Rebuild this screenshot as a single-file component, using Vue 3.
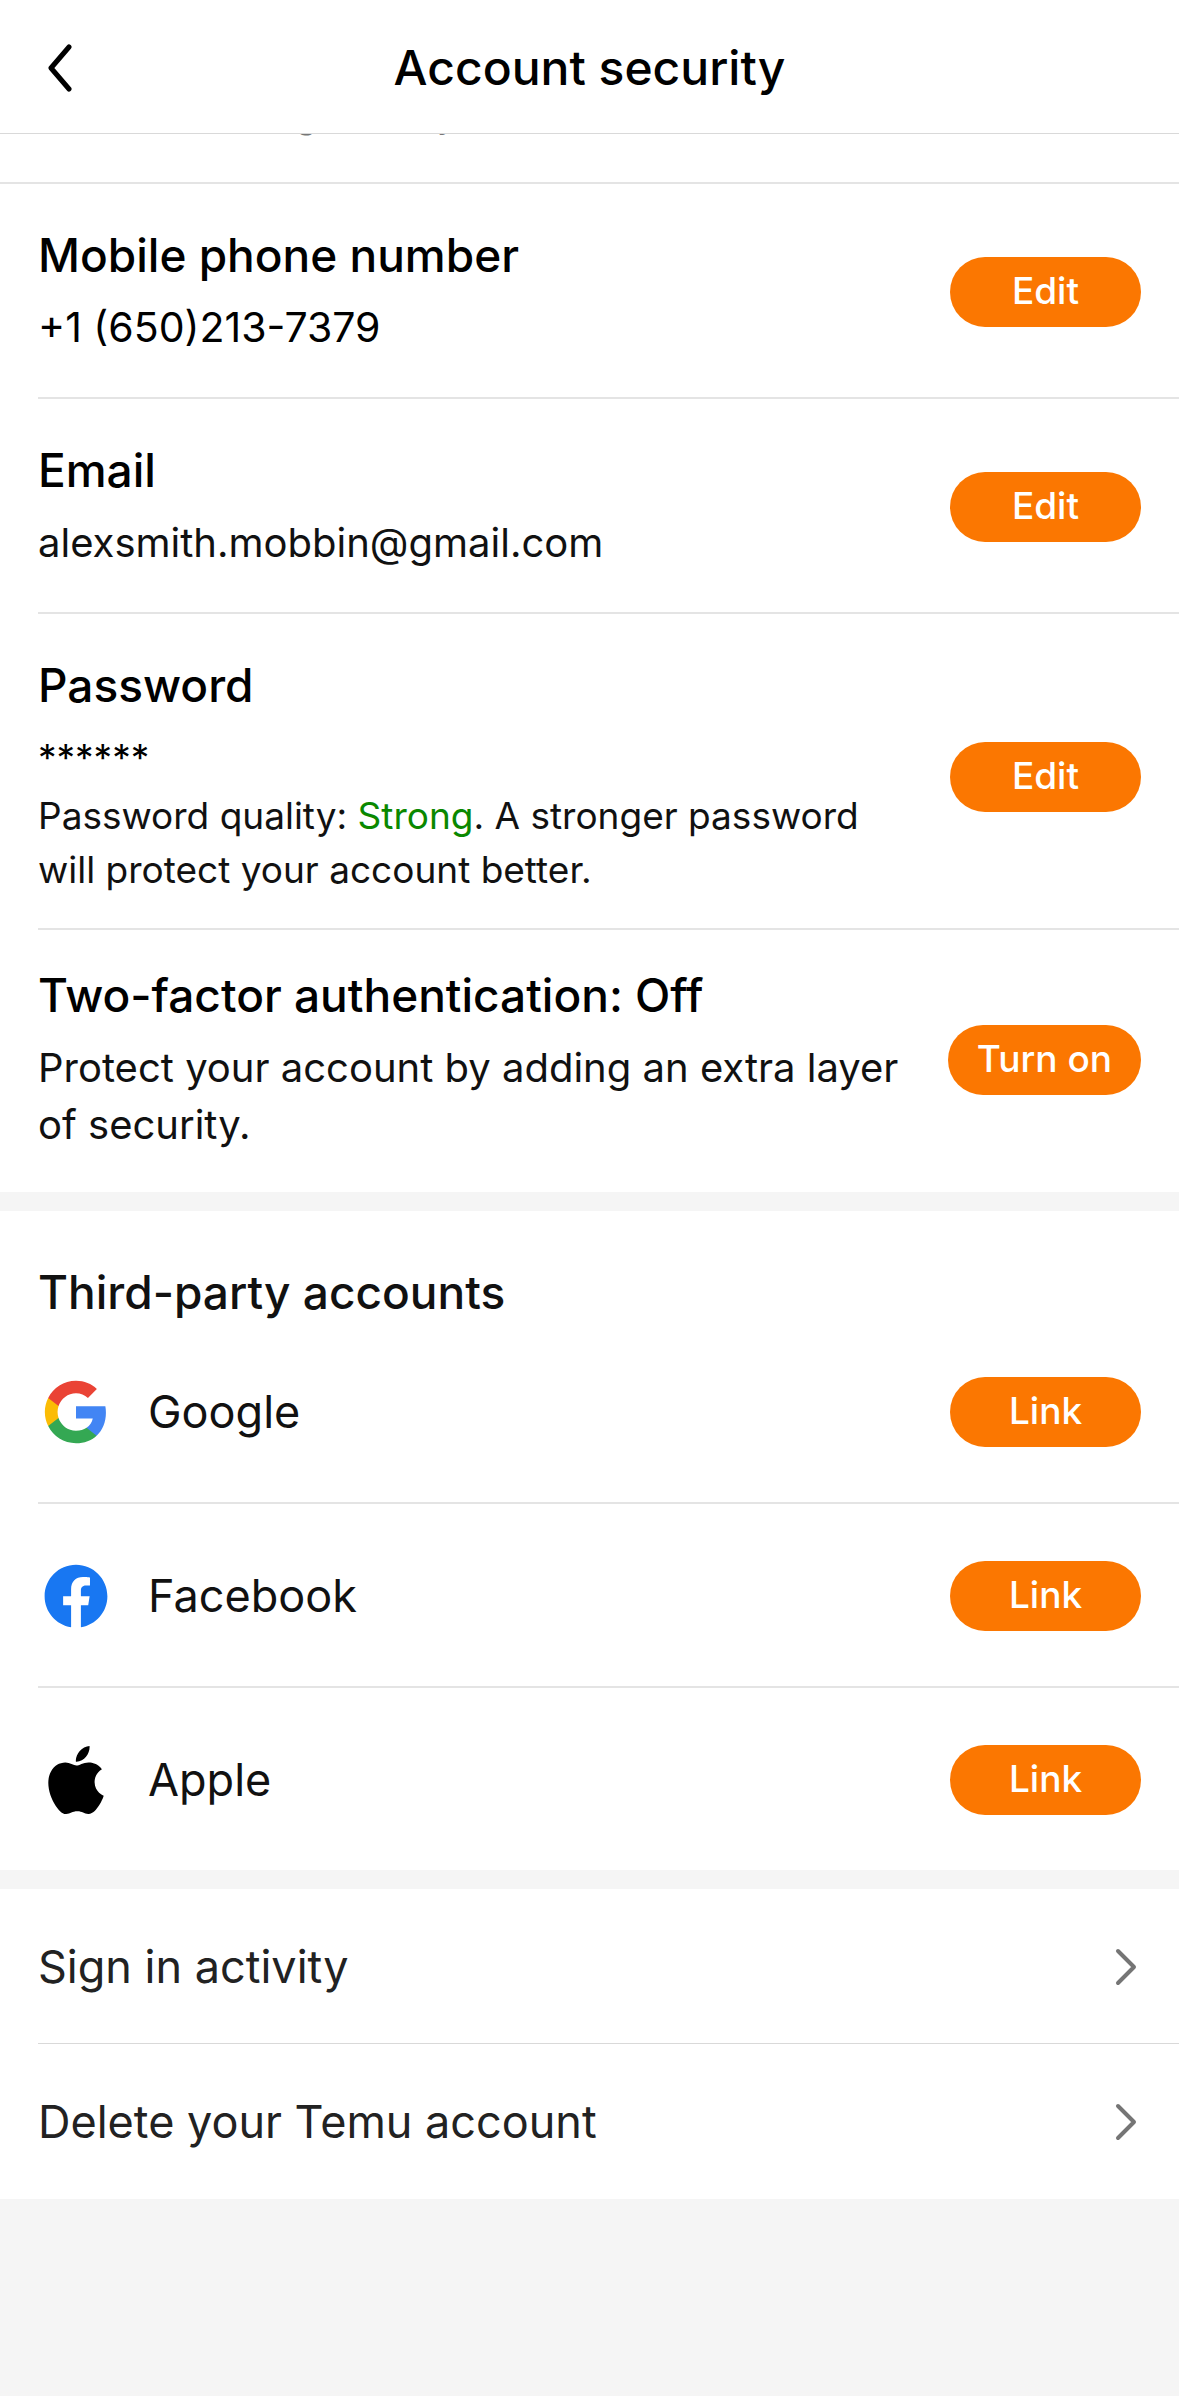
<script setup>
const credentials = [
  { title: 'Mobile phone number', value: '+1 (650)213-7379', action: 'Edit', kind: 'phone' },
  { title: 'Email', value: 'alexsmith.mobbin@gmail.com', action: 'Edit', kind: 'soft' },
]
const providers = ['Google', 'Facebook', 'Apple']
const links = ['Sign in activity', 'Delete your Temu account']
</script>

<template>
  <div class="page">
    <header class="bar">
      <button class="back" aria-label="Back">
        <svg viewBox="0 0 24 48" width="24" height="48" fill="none" stroke="#000" stroke-width="5" stroke-linecap="round" stroke-linejoin="round">
          <path d="M21 3 3 24l18 21" />
        </svg>
      </button>
      <h1>Account security</h1>
    </header>

    <main>
      <section class="group">
        <!-- Scrolled almost completely under the header -->
        <div class="notice"><p>We have a strong security</p></div>
        <div v-for="c in credentials" :key="c.title" class="row line">
          <div class="info">
            <h2>{{ c.title }}</h2>
            <p class="value" :class="c.kind">{{ c.value }}</p>
          </div>
          <button class="pill">{{ c.action }}</button>
        </div>
        <div class="row line password">
          <div class="info">
            <h2>Password</h2>
            <p class="value stars">******</p>
            <p class="hint">Password quality: <span class="strong">Strong</span>. A stronger password will protect your account better.</p>
          </div>
          <button class="pill">Edit</button>
        </div>
        <div class="row factor">
          <div class="info">
            <h2>Two-factor authentication: Off</h2>
            <p class="value soft">Protect your account by adding an extra layer of security.</p>
          </div>
          <button class="pill">Turn on</button>
        </div>
      </section>

      <section class="group third">
        <h2>Third-party accounts</h2>
        <div v-for="(p, i) in providers" :key="p" class="row provider" :class="{ line: i < 2 }">
          <svg v-if="p === 'Google'" class="logo" viewBox="0 0 24 24">
            <path fill="#4285f4" d="M22.56 12.25c0-.78-.07-1.53-.2-2.25H12v4.26h5.92c-.26 1.37-1.04 2.53-2.21 3.31v2.77h3.57c2.08-1.92 3.28-4.74 3.28-8.09z" />
            <path fill="#34a853" d="M12 23c2.97 0 5.46-.98 7.28-2.66l-3.57-2.77c-.98.66-2.23 1.06-3.71 1.06-2.86 0-5.29-1.93-6.16-4.53H2.18v2.84C3.99 20.53 7.7 23 12 23z" />
            <path fill="#fbbc05" d="M5.84 14.09c-.22-.66-.35-1.36-.35-2.09s.13-1.43.35-2.09V7.07H2.18C1.43 8.55 1 10.22 1 12s.43 3.45 1.18 4.93l3.66-2.84z" />
            <path fill="#ea4335" d="M12 5.38c1.62 0 3.06.56 4.21 1.64l3.15-3.15C17.45 2.09 14.97 1 12 1 7.7 1 3.99 3.47 2.18 7.07l3.66 2.84c.87-2.6 3.3-4.53 6.16-4.53z" />
          </svg>
          <svg v-else-if="p === 'Facebook'" class="logo" viewBox="-1 -1 26 26">
            <path fill="#1877f2" d="M24 12.073c0-6.627-5.373-12-12-12s-12 5.373-12 12c0 5.99 4.388 10.954 10.125 11.854v-8.385H7.078v-3.47h3.047V9.43c0-3.007 1.792-4.669 4.533-4.669 1.312 0 2.686.235 2.686.235v2.953H15.83c-1.491 0-1.956.925-1.956 1.874v2.25h3.328l-.532 3.47h-2.796v8.385C19.612 23.027 24 18.062 24 12.073z" />
          </svg>
          <svg v-else class="logo" viewBox="0 0 24 24">
            <path fill="#000" d="M12.152 6.896c-.948 0-2.415-1.078-3.96-1.04-2.04.027-3.91 1.183-4.961 3.014-2.117 3.675-.546 9.103 1.519 12.09 1.013 1.454 2.208 3.09 3.792 3.039 1.52-.065 2.09-.987 3.935-.987 1.831 0 2.35.987 3.96.948 1.637-.026 2.676-1.48 3.676-2.948 1.156-1.688 1.636-3.325 1.662-3.415-.039-.013-3.182-1.221-3.22-4.857-.026-3.04 2.48-4.494 2.597-4.559-1.429-2.09-3.623-2.324-4.39-2.376-2-.156-3.675 1.09-4.61 1.09zM15.53 3.83c.843-1.012 1.4-2.427 1.245-3.83-1.207.052-2.662.805-3.532 1.818-.78.896-1.454 2.338-1.273 3.714 1.338.104 2.715-.688 3.559-1.701" />
          </svg>
          <span class="name">{{ p }}</span>
          <button class="pill">Link</button>
        </div>
      </section>

      <nav class="group">
        <a v-for="(l, i) in links" :key="l" href="#" class="row nav" :class="{ line: i < 1 }">
          <span>{{ l }}</span>
          <svg viewBox="0 0 22 38" width="22" height="38" fill="none" stroke="#757575" stroke-width="4" stroke-linecap="round" stroke-linejoin="round">
            <path d="M3 3l16 16L3 35" />
          </svg>
        </a>
      </nav>
    </main>
  </div>
</template>

<style>
body {
  margin: 0;
  background: #f5f5f5;
}
</style>

<style scoped>
.page {
  font-family: Inter, "Liberation Sans", sans-serif;
  color: #111;
}
h1, h2, p {
  margin: 0;
}
.bar {
  display: grid;
  grid-template-columns: 1fr auto 1fr;
  align-items: center;
  height: 133px;
  border-bottom: 1px solid #d9d9d9;
  background: #fff;
}
h1 {
  padding-top: 2px;
  font-size: 48px;
  line-height: 60px;
  font-weight: 500;
  color: #000;
}
.back {
  justify-self: start;
  display: flex;
  padding: 2px 48px 0;
  border: 0;
  background: none;
}
main {
  display: flex;
  flex-direction: column;
  gap: 19px;
}
.group {
  background: #fff;
}
.notice {
  display: flex;
  align-items: flex-end;
  height: 2px;
  padding: 0 38px 46px;
  border-bottom: 2px solid #e4e4e4;
  overflow: hidden;
}
.notice p {
  font-size: 34px;
  line-height: 40px;
  color: #777;
}
.row {
  display: flex;
  align-items: center;
  justify-content: space-between;
  margin-left: 38px;
  padding: 43px 38px 41px 0;
}
.line {
  border-bottom: 2px solid #e4e4e4;
}
.info {
  width: 870px;
}
h2 {
  font-size: 46px;
  line-height: 56px;
  font-weight: 500;
  color: #000;
}
.value {
  margin-top: 16px;
  font-size: 40px;
  line-height: 57px;
  color: #000;
}
.phone {
  font-size: 41px;
}
.soft {
  color: #111;
}
.stars {
  font-size: 37px;
}
.hint {
  margin-top: 3px;
  font-size: 37px;
  line-height: 54px;
}
.strong {
  color: #0a8800;
}
.password {
  padding-bottom: 31px;
}
.factor {
  padding: 37px 38px 39px 0;
}
.pill {
  flex: none;
  min-width: 191px;
  height: 70px;
  padding: 0 29px 2px;
  border: 0;
  border-radius: 35px;
  background: #fb7701;
  color: #fff;
  font: 500 37px/66px Inter, "Liberation Sans", sans-serif;
}
.third h2 {
  padding: 53px 38px 0;
  color: #111;
}
.provider {
  padding: 57px 38px 55px 0;
}
.logo {
  width: 68px;
  height: 68px;
  margin: 0 38px 0 4px;
}
.name {
  flex: 1;
  font-size: 45px;
  line-height: 56px;
}
.nav {
  padding: 50px 42px 49px 0;
  font-size: 45px;
  line-height: 56px;
  color: #222;
  text-decoration: none;
}
.nav.line {
  padding-bottom: 48px;
  border-bottom: 1px solid #d9d9d9;
}
</style>
